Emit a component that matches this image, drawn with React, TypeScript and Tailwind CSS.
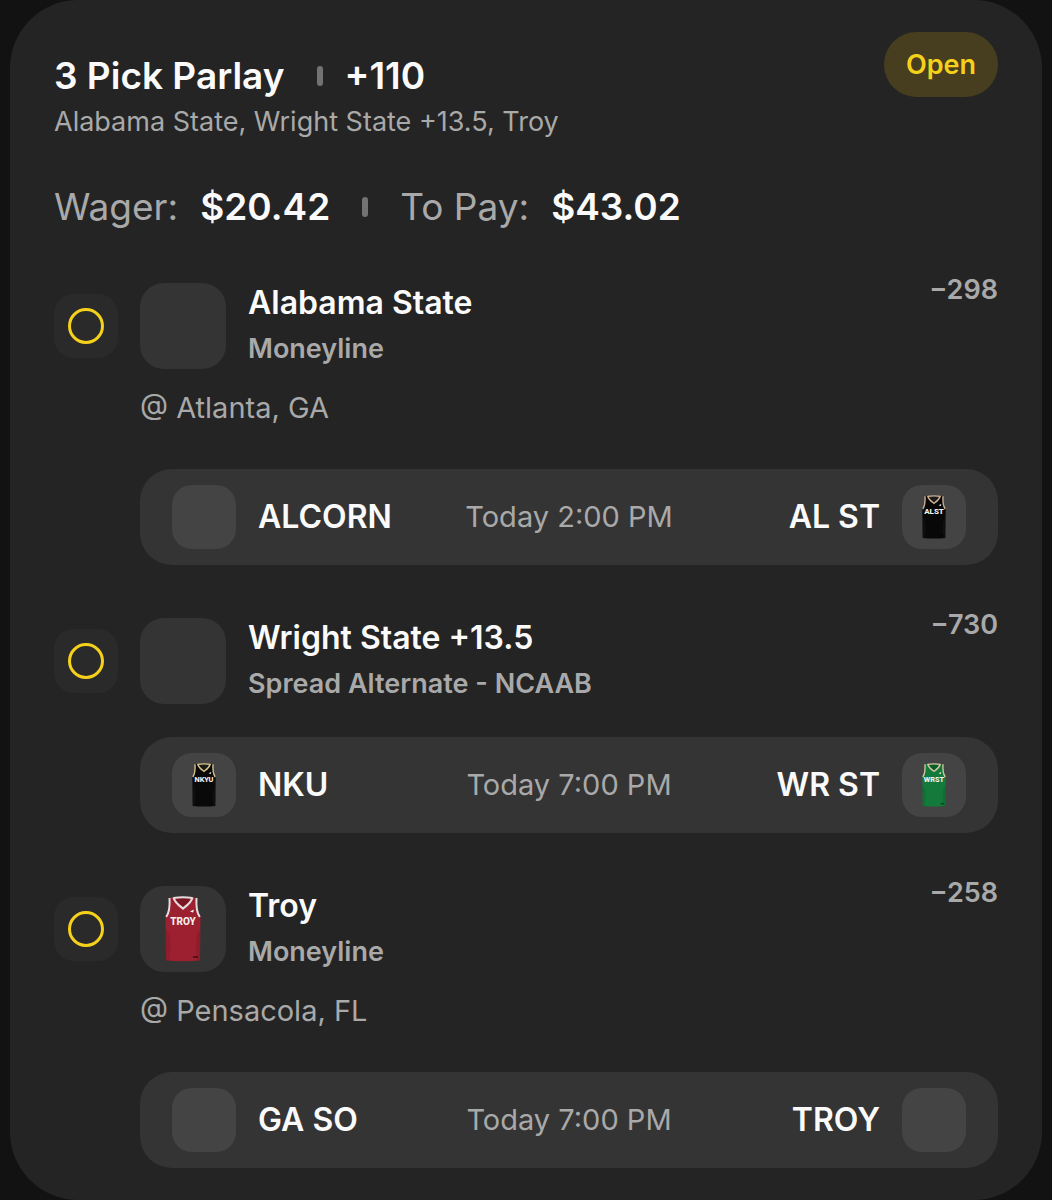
import clsx from "clsx";

type JerseyName = "alst" | "nku" | "wrst" | "troy";

interface Team {
  name: string;
  jersey?: JerseyName;
}

interface Leg {
  title: string;
  market: string;
  odds: string;
  location?: string;
  jersey?: JerseyName;
  away: Team;
  home: Team;
  time: string;
}

const jerseys = {
  alst: { label: "ALST", size: 12, body: "#080808", shade: "#1c1c1c", trim: "#cdb093" },
  nku: { label: "NKYU", size: 11, body: "#090909", shade: "#1b1b1b", trim: "#d8c48c" },
  wrst: { label: "WRST", size: 11, body: "#147a3c", shade: "#0c5c2b", trim: "#d3c9a0" },
  troy: { label: "TROY", size: 10, body: "#9c2030", shade: "#7b1624", trim: "#e4dcdd" },
};

const legs: Leg[] = [
  {
    title: "Alabama State",
    market: "Moneyline",
    odds: "−298",
    location: "@ Atlanta, GA",
    away: { name: "ALCORN" },
    home: { name: "AL ST", jersey: "alst" },
    time: "Today 2:00 PM",
  },
  {
    title: "Wright State +13.5",
    market: "Spread Alternate - NCAAB",
    odds: "−730",
    away: { name: "NKU", jersey: "nku" },
    home: { name: "WR ST", jersey: "wrst" },
    time: "Today 7:00 PM",
  },
  {
    title: "Troy",
    market: "Moneyline",
    odds: "−258",
    location: "@ Pensacola, FL",
    jersey: "troy",
    away: { name: "GA SO" },
    home: { name: "TROY" },
    time: "Today 7:00 PM",
  },
];

const Jersey = ({ name, className }: { name: JerseyName; className: string }) => {
  const { label, size, body, shade, trim } = jerseys[name];

  return (
    <svg viewBox="0 0 36 66" className={className} aria-hidden="true">
      {/* inside of the back collar */}
      <path d="M8 2 Q18 0 28 2 L26 8 L18 12 L10 8Z" fill={shade} />
      <path
        d="M5 1.5 L8.5 1.5 C10 7 14 10 18 13 C22 10 26 7 27.5 1.5 L31 1.5 C30.500 9 31.5 16 35.5 20 L35 64.5 Q18 66 1 64.5 L0.5 20 C4.5 16 5.500 9 5 1.5Z"
        fill={body}
      />
      <path d="M3 36 C7 46 5 56 4 65 L1 64.5 L1 34Z M33 36 C30 46 31 56 32 65 L35 64.5 L35 34Z" fill={shade} opacity="0.4" />
      <path d="M8.5 1.5 C10 7 14 9.500 18 12.5 C22 9.500 26 7 27.5 1.5" fill="none" stroke={trim} strokeWidth="2.2" />
      <path d="M8.5 2 Q18 0.500 27.5 2" fill="none" stroke={trim} strokeWidth="1.8" />
      <path d="M4.500 2 C5 10 4 17 1.200 21 M31.500 2 C31 10 32 17 34.800 21" fill="none" stroke={trim} strokeWidth="2" />
      <path d="M25 15.5 L29 13.5 L28 16.500Z" fill="#fff" />
      <rect x="28" y="60" width="5" height="2" fill="#000" opacity="0.45" />
      <text
        x="18"
        y="29"
        textAnchor="middle"
        fontFamily="Roboto, sans-serif"
        fontWeight="800"
        fontSize={size}
        fill="#f4f0ee"
      >
        {label}
      </text>
    </svg>
  );
};

const TeamTile = ({ jersey }: { jersey?: JerseyName }) => (
  <div className="flex size-16 shrink-0 items-center justify-center rounded-[20px] bg-[#444444]">
    {jersey && <Jersey name={jersey} className="h-11 w-6" />}
  </div>
);

const Divider = ({ className }: { className?: string }) => (
  <span className={clsx("h-5 w-1.5 shrink-0 rounded-sm bg-[#737373]", className)} />
);

const LegRow = ({ leg }: { leg: Leg }) => (
  <li>
    <div className="flex items-center gap-[22px]">
      <div className="flex size-16 shrink-0 items-center justify-center rounded-[20px] bg-[#2a2a2a]">
        <span className="size-9 rounded-full border-[3px] border-[#f5d11b]" />
      </div>
      <div className="flex size-[86px] shrink-0 items-center justify-center rounded-3xl bg-[#343434]">
        {leg.jersey && <Jersey name={leg.jersey} className="h-[66px] w-9" />}
      </div>
      <div className="min-w-0 flex-1">
        <h2 className="text-[32px] leading-[46px] font-semibold text-[#fafafa]">{leg.title}</h2>
        <p className="text-[27px] leading-[46px] font-semibold text-[#a9a9a9]">{leg.market}</p>
      </div>
      <span className="-mt-1.5 self-start text-[27px] leading-8 font-semibold text-[#a9a9a9]">{leg.odds}</span>
    </div>
    <div className="pl-[86px]">
      {leg.location && (
        <p className="mt-[18px] text-[29px] leading-9 text-[#a9a9a9]">{leg.location}</p>
      )}
      <div
        className={clsx(
          "grid grid-cols-[1fr_auto_1fr] items-center rounded-[32px] bg-[#343434] px-8 py-4",
          leg.location ? "mt-[43px]" : "mt-[30px]",
        )}
      >
        <div className="flex items-center gap-[22px]">
          <TeamTile jersey={leg.away.jersey} />
          <span className="text-[32px] leading-10 font-semibold text-[#fafafa]">{leg.away.name}</span>
        </div>
        <span className="text-[29px] leading-9 text-[#a9a9a9]">{leg.time}</span>
        <div className="flex items-center justify-end gap-[22px]">
          <span className="text-[32px] leading-10 font-semibold text-[#fafafa]">{leg.home.name}</span>
          <TeamTile jersey={leg.home.jersey} />
        </div>
      </div>
    </div>
  </li>
);

export default function App() {
  return (
    <main className="min-h-screen bg-[#121212] px-2.5 font-[Inter,sans-serif]">
      <article className="rounded-[68px] bg-[#242424] px-11 py-8">
        <header className="flex items-start justify-between">
          <div className="pt-5">
            <h1 className="flex items-center text-[37px] leading-12 font-semibold text-[#fafafa]">
              3 Pick Parlay
              <Divider className="mr-[22px] ml-8" />
              +110
            </h1>
            <p className="text-[27px] leading-[44px] text-[#a9a9a9]">Alabama State, Wright State +13.5, Troy</p>
          </div>
          <span className="rounded-full bg-[#463e1e] px-[22px] py-4 text-[27px] leading-[33px] font-semibold text-[#f5d11b]">
            Open
          </span>
        </header>

        <dl className="mt-[39px] flex items-center text-[37px] leading-12">
          <dt className="text-[#a9a9a9]">Wager:</dt>
          <dd className="ml-[22px] font-semibold text-[#fafafa]">$20.42</dd>
          <Divider className="mx-8" />
          <dt className="text-[#a9a9a9]">To Pay:</dt>
          <dd className="ml-[22px] font-semibold text-[#fafafa]">$43.02</dd>
        </dl>

        <ul className="mt-[49px] space-y-[50px]">
          {legs.map((leg) => (
            <LegRow key={leg.title} leg={leg} />
          ))}
        </ul>
      </article>
    </main>
  );
}
